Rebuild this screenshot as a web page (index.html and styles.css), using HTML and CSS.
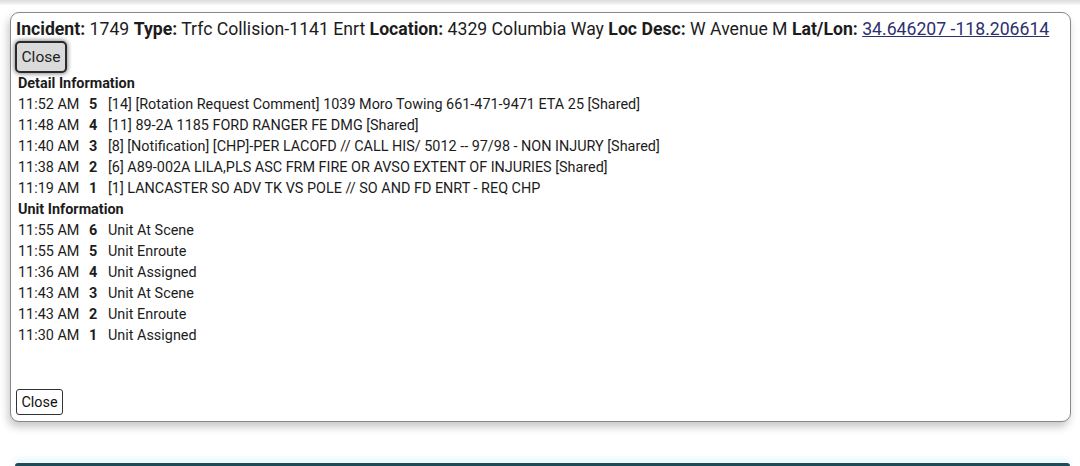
FILE: index.html
```html
<!DOCTYPE html>
<html>
<head>
<meta charset="utf-8">
<link rel="stylesheet" href="styles.css">
</head>
<body>
<div class="topband"></div>
<div class="panel">
  <div class="header">
    <b>Incident:</b> 1749 <b>Type:</b> Trfc Collision-1141 Enrt <b>Location:</b> 4329 Columbia Way <b>Loc Desc:</b> W Avenue M <b>Lat/Lon:</b> <a href="#" class="link">34.646207 -118.206614</a>
  </div>
  <button class="btn-top">Close</button>
  <div class="section-title">Detail Information</div>
  <div class="rows">
    <span class="t">11:52 AM</span><span class="n">5</span><span class="d">[14] [Rotation Request Comment] 1039 Moro Towing 661-471-9471 ETA 25 [Shared]</span>
    <span class="t">11:48 AM</span><span class="n">4</span><span class="d">[11] 89-2A 1185 FORD RANGER FE DMG [Shared]</span>
    <span class="t">11:40 AM</span><span class="n">3</span><span class="d">[8] [Notification] [CHP]-PER LACOFD // CALL HIS/ 5012 -- 97/98 - NON INJURY [Shared]</span>
    <span class="t">11:38 AM</span><span class="n">2</span><span class="d">[6] A89-002A LILA,PLS ASC FRM FIRE OR AVSO EXTENT OF INJURIES [Shared]</span>
    <span class="t">11:19 AM</span><span class="n">1</span><span class="d">[1] LANCASTER SO ADV TK VS POLE // SO AND FD ENRT - REQ CHP</span>
  </div>
  <div class="section-title">Unit Information</div>
  <div class="rows">
    <span class="t">11:55 AM</span><span class="n">6</span><span class="d">Unit At Scene</span>
    <span class="t">11:55 AM</span><span class="n">5</span><span class="d">Unit Enroute</span>
    <span class="t">11:36 AM</span><span class="n">4</span><span class="d">Unit Assigned</span>
    <span class="t">11:43 AM</span><span class="n">3</span><span class="d">Unit At Scene</span>
    <span class="t">11:43 AM</span><span class="n">2</span><span class="d">Unit Enroute</span>
    <span class="t">11:30 AM</span><span class="n">1</span><span class="d">Unit Assigned</span>
  </div>
  <button class="btn-bottom">Close</button>
</div>
<div class="nextbar"></div>
</body>
</html>
```
FILE: styles.css
```css
html, body {
  margin: 0;
  padding: 0;
  background: #ffffff;
  font-family: Roboto, "Noto Sans", Arial, sans-serif;
  color: #222;
  overflow: hidden;
}
.topband {
  height: 5px;
  background: linear-gradient(#dcdcdc, #ececec 60%, #f7f7f7);
}
.panel {
  box-sizing: border-box;
  margin: 7px 0 0 10px;
  width: 1061px;
  height: 410px;
  border: 1.5px solid #888;
  border-radius: 9px;
  padding: 6px 4px 0 5px;
  background: #fff;
  box-shadow: -2px 5px 9px rgba(0,0,0,0.22);
}
.header {
  font-size: 17.65px;
  line-height: 21px;
  color: #1c1c1c;
  white-space: nowrap;
}
.header b { font-weight: 700; }
.link {
  color: #2e2f6e;
  text-decoration: underline;
}
.btn-top {
  display: block;
  margin: 1px 0 0 -1px;
  box-sizing: border-box;
  width: 52px;
  height: 32px;
  padding: 0;
  font-family: Roboto, Arial, sans-serif;
  font-size: 15.5px;
  color: #222;
  background: #dadada;
  border: 2px solid #2a2a2a;
  border-radius: 5px;
  box-shadow: 0 0 4px 1px rgba(0,0,0,0.45);
}
.section-title {
  font-size: 14.4px;
  font-weight: 700;
  line-height: 21px;
  margin-left: 2px;
  color: #1c1c1c;
}
.rows {
  display: grid;
  grid-template-columns: 71px 19px 1fr;
  font-size: 14.4px;
  line-height: 21px;
  margin-left: 2px;
  color: #1c1c1c;
}
.rows .n { font-weight: 700; }
.btn-bottom {
  display: block;
  margin: 43px 0 0 0;
  box-sizing: border-box;
  width: 47px;
  height: 26px;
  padding: 0;
  font-family: Roboto, Arial, sans-serif;
  font-size: 14.4px;
  color: #111;
  background: #fff;
  border: 1px solid #333;
  border-radius: 3px;
}
.nextbar {
  margin: 41px 0 0 15px;
  width: 1055px;
  height: 3px;
  background: #1d4b58;
  border-radius: 3px 3px 0 0;
  box-shadow: 0 -3px 6px rgba(180,225,235,0.6);
}
```
